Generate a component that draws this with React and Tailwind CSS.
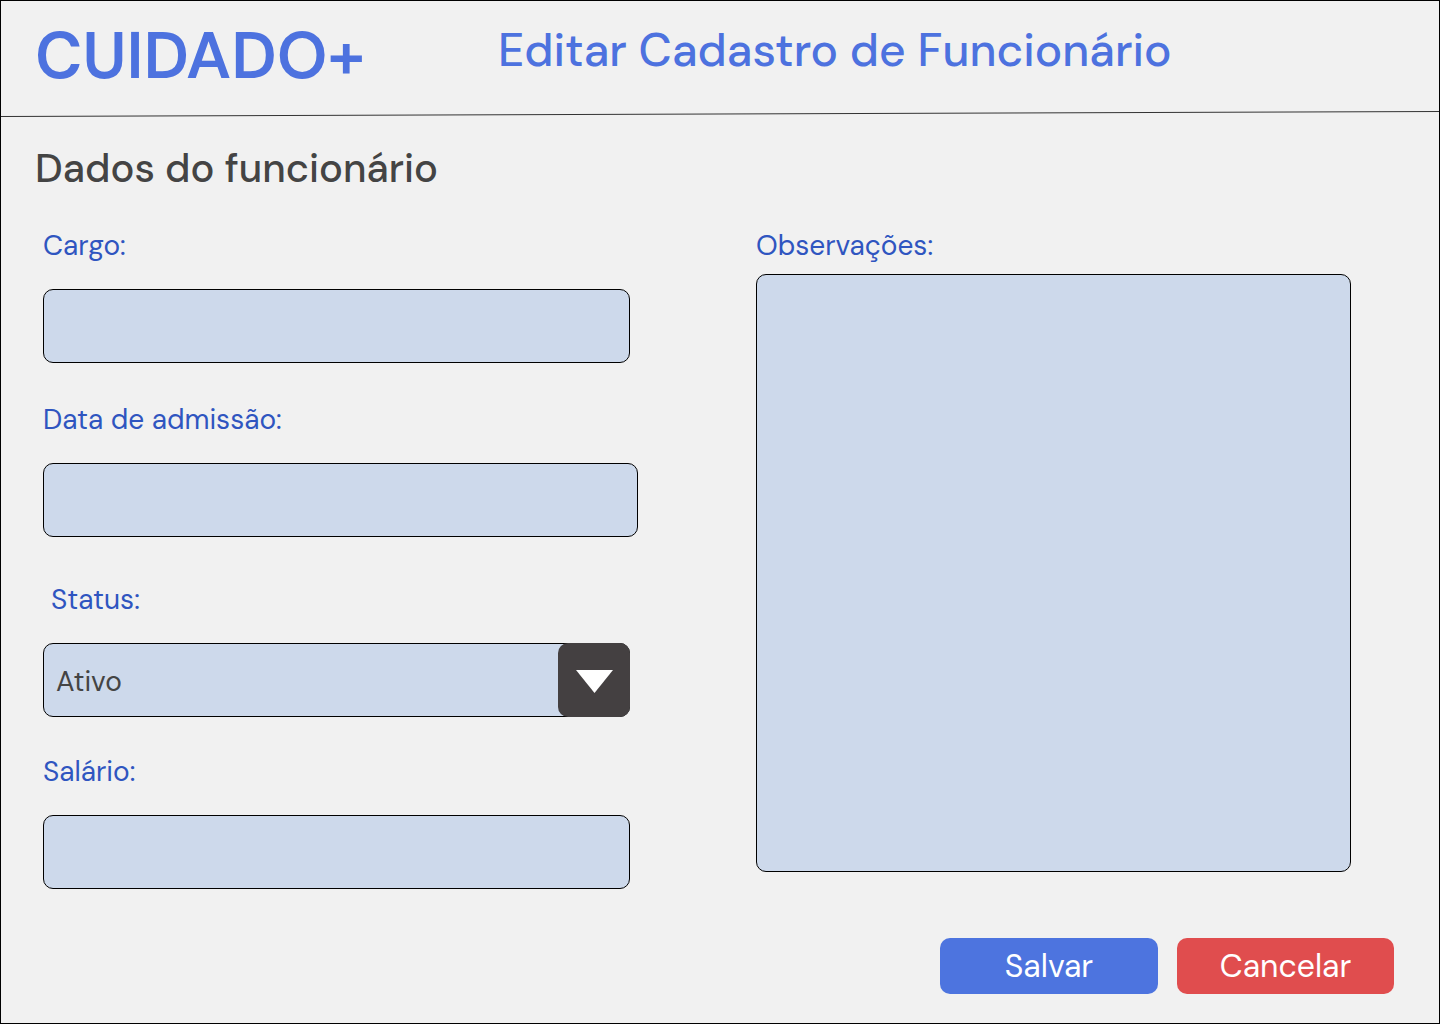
const labelClass = "block text-[28px] leading-9 text-[#2f55c0]";
const boxClass =
  "block w-full rounded-[10px] border border-black bg-[#cdd9eb] px-3 text-[28px] text-[#444444]";

function Field({ id, label, className = "" }) {
  return (
    <div className={className}>
      <label htmlFor={id} className={labelClass}>{label}</label>
      <input id={id} type="text" className={`${boxClass} mt-[25px] h-[74px]`} />
    </div>
  );
}

export default function App() {
  return (
    <div className="flex min-h-screen flex-col border border-black bg-[#f1f1f1] font-['DM_Sans','Inter',sans-serif]">
      <header>
        <div className="grid h-[110px] grid-cols-[463px_1fr] items-start pl-[34px]">
          <div className="pt-[19px] text-[65px] leading-[72px] font-semibold text-[#4d72df]">CUIDADO+</div>
          <h1 className="pt-[19px] text-[46px] leading-[60px] font-medium text-[#4d72df]">Editar Cadastro de Funcionário</h1>
        </div>
        <svg className="block h-[7px] w-full" viewBox="0 0 1438 7" preserveAspectRatio="none" aria-hidden="true">
          <path d="M0 5.5L1438 0.5" stroke="#333" strokeWidth="1" />
        </svg>
      </header>
      <form className="flex grow flex-col pr-[45px] pl-[42px]" onSubmit={(e) => e.preventDefault()}>
        <h2 className="-ml-2 pt-6 text-[40px] leading-[52px] font-medium text-[#444444]">Dados do funcionário</h2>
        <div className="grid grid-cols-2 gap-x-[118px] pt-[34px] pr-[43px]">
          <div>
            <Field id="cargo" label="Cargo:" className="pr-2" />
            <Field id="admissao" label="Data de admissão:" className="pt-[39px]" />
            <div className="pt-[45px] pr-2">
              <label htmlFor="status" className={`${labelClass} pl-2`}>Status:</label>
              <div className="relative mt-[25px]">
                <select id="status" className={`${boxClass} h-[74px] appearance-none pt-1`}>
                  <option>Ativo</option>
                </select>
                <span className="pointer-events-none absolute inset-y-0 right-0 flex w-[72px] items-center justify-center rounded-[10px] bg-[#444041]">
                  <svg width="38" height="26" viewBox="0 0 38 26" fill="#fff"><path d="M1 3H38L19.5 26Z" /></svg>
                </span>
              </div>
            </div>
            <Field id="salario" label="Salário:" className="pt-[37px] pr-2" />
          </div>
          <div>
            <label htmlFor="observacoes" className={labelClass}>Observações:</label>
            <textarea id="observacoes" className={`${boxClass} mt-[10px] h-[598px] resize-none py-3`} />
          </div>
        </div>
        <div className="flex justify-end gap-[19px] pt-[49px] pb-[29px] text-[32px] text-white">
          <button type="submit" className="h-14 w-[218px] rounded-[10px] bg-[#4d74df]">Salvar</button>
          <button type="button" className="h-14 w-[217px] rounded-[10px] bg-[#e04d4e]">Cancelar</button>
        </div>
      </form>
    </div>
  );
}
